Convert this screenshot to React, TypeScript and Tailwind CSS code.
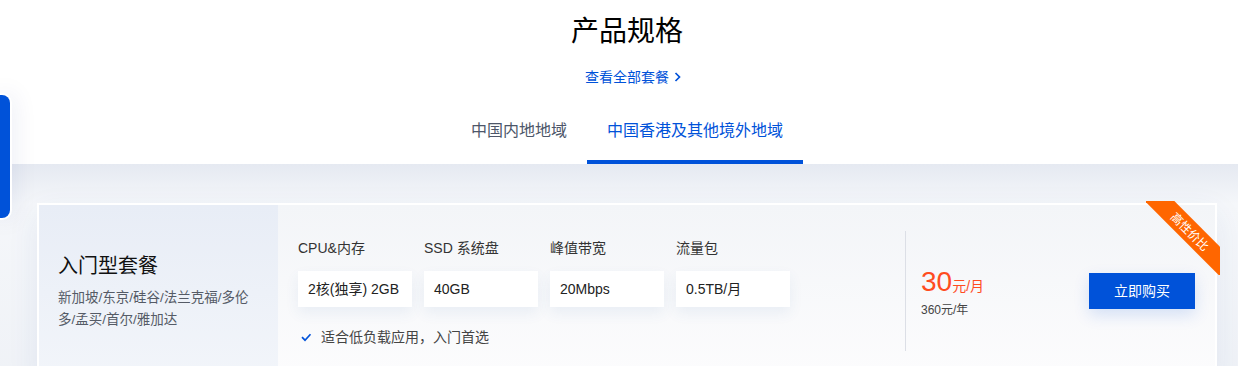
import React from 'react';

const specs = [
  { label: 'CPU&内存', value: '2核(独享) 2GB' },
  { label: 'SSD 系统盘', value: '40GB' },
  { label: '峰值带宽', value: '20Mbps' },
  { label: '流量包', value: '0.5TB/月' },
];

const tabs = [
  { name: '中国内地地域', active: false },
  { name: '中国香港及其他境外地域', active: true },
];

export default function App() {
  return (
    <div className="relative h-[366px] w-full overflow-hidden bg-white font-['Liberation_Sans','Noto_Sans_CJK_SC',sans-serif] text-[#333]">
      {/* floating side widget */}
      <div className="absolute left-0 top-[93px] z-10 h-[127px] w-[12px] rounded-r-[10px] border-y-2 border-r-2 border-white bg-[#0052d9] shadow-[0_0_24px_rgba(0,45,130,0.12)]" />

      <div className="ml-[37px] flex w-[1180px] flex-col items-center pt-[12px]">
        <h2 className="text-[28px] font-normal leading-[40px] text-black">产品规格</h2>
        <a className="ml-[12px] mt-[14px] flex items-center gap-[5px] text-[14px] leading-[22px] text-[#0052d9]">
          查看全部套餐
          <svg width="7" height="10" viewBox="0 0 7 10" fill="none">
            <path d="M1.5 1l4 4-4 4" stroke="#0052d9" strokeWidth="1.7" />
          </svg>
        </a>
        <div className="mt-[31px] flex">
          {tabs.map((t) => (
            <div
              key={t.name}
              className={`border-b-4 px-[20px] pb-[17px] text-[16px] leading-[24px] ${
                t.active ? 'border-[#0052d9] text-[#0052d9]' : 'border-transparent text-[#4d5669]'
              }`}
            >
              {t.name}
            </div>
          ))}
        </div>
      </div>

      <section className="bg-[linear-gradient(180deg,#e5e9f1_0px,#f5f7fa_40px,#eef1f6_100%)] pb-[40px] pt-[39px]">
        <div className="relative ml-[37px] flex h-[176px] w-[1180px] border-2 border-white shadow-[0_10px_30px_rgba(41,72,152,0.08)]">
          {/* left panel */}
          <div className="flex w-[239px] shrink-0 flex-col justify-center bg-gradient-to-b from-[#e8edf6] to-[#f2f5fa] pl-[19px]">
            <div className="text-[20px] leading-[28px] text-[#111]">入门型套餐</div>
            <div className="mt-[7px] whitespace-nowrap text-[13.5px] leading-[22px] text-[#555b66]">
              新加坡/东京/硅谷/法兰克福/多伦
              <br />
              多/孟买/首尔/雅加达
            </div>
          </div>

          {/* right part */}
          <div className="flex flex-1 items-center bg-gradient-to-b from-[#f3f5f8] to-[#fcfcfd]">
            <div className="w-[627px] shrink-0 pl-[20px] pt-[2px]">
              <div className="grid w-[492px] grid-cols-4 gap-x-[12px]">
                {specs.map((s) => (
                  <div key={s.label}>
                    <div className="text-[14px] leading-[20px] text-[#333]">{s.label}</div>
                    <div className="mt-[13px] flex h-[36px] items-center bg-white pl-[10px] pt-[2px] text-[14px] text-[#222] shadow-[0_6px_14px_rgba(55,99,170,0.08)]">
                      {s.value}
                    </div>
                  </div>
                ))}
              </div>
              <div className="mt-[20px] flex items-center text-[14px] leading-[20px] text-[#444]">
                <svg width="14" height="14" viewBox="0 0 14 14" fill="none" className="ml-[1px]">
                  <path d="M3 7.2l3 3 5.5-6" stroke="#0052d9" strokeWidth="1.7" />
                </svg>
                <span className="ml-[8px]">适合低负载应用，入门首选</span>
              </div>
            </div>

            <div className="h-[120px] w-px shrink-0 bg-[#dcdfe6]" />

            <div className="flex flex-1 flex-col pl-[15px] pt-[2px]">
              <div className="flex items-baseline text-[#ff4c1f]">
                <span className="text-[28px] leading-[36px]">30</span>
                <span className="text-[14px]">元/月</span>
              </div>
              <div className="text-[12px] leading-[20px] text-[#444]">360元/年</div>
            </div>

            <button className="mr-[20px] h-[36px] w-[106px] bg-[#0052d9] text-[14px] text-white shadow-[0_6px_16px_rgba(0,82,217,0.15)]">
              立即购买
            </button>
          </div>

          {/* ribbon */}
          <div className="absolute -right-[5px] -top-[4px] h-[74px] w-[74px] overflow-hidden">
            <div className="absolute left-[-11px] top-[20px] flex h-[21px] w-[110px] rotate-45 items-center justify-center bg-[#ff6600] text-[12px] text-white">
              高性价比
            </div>
          </div>
        </div>
      </section>
    </div>
  );
}
